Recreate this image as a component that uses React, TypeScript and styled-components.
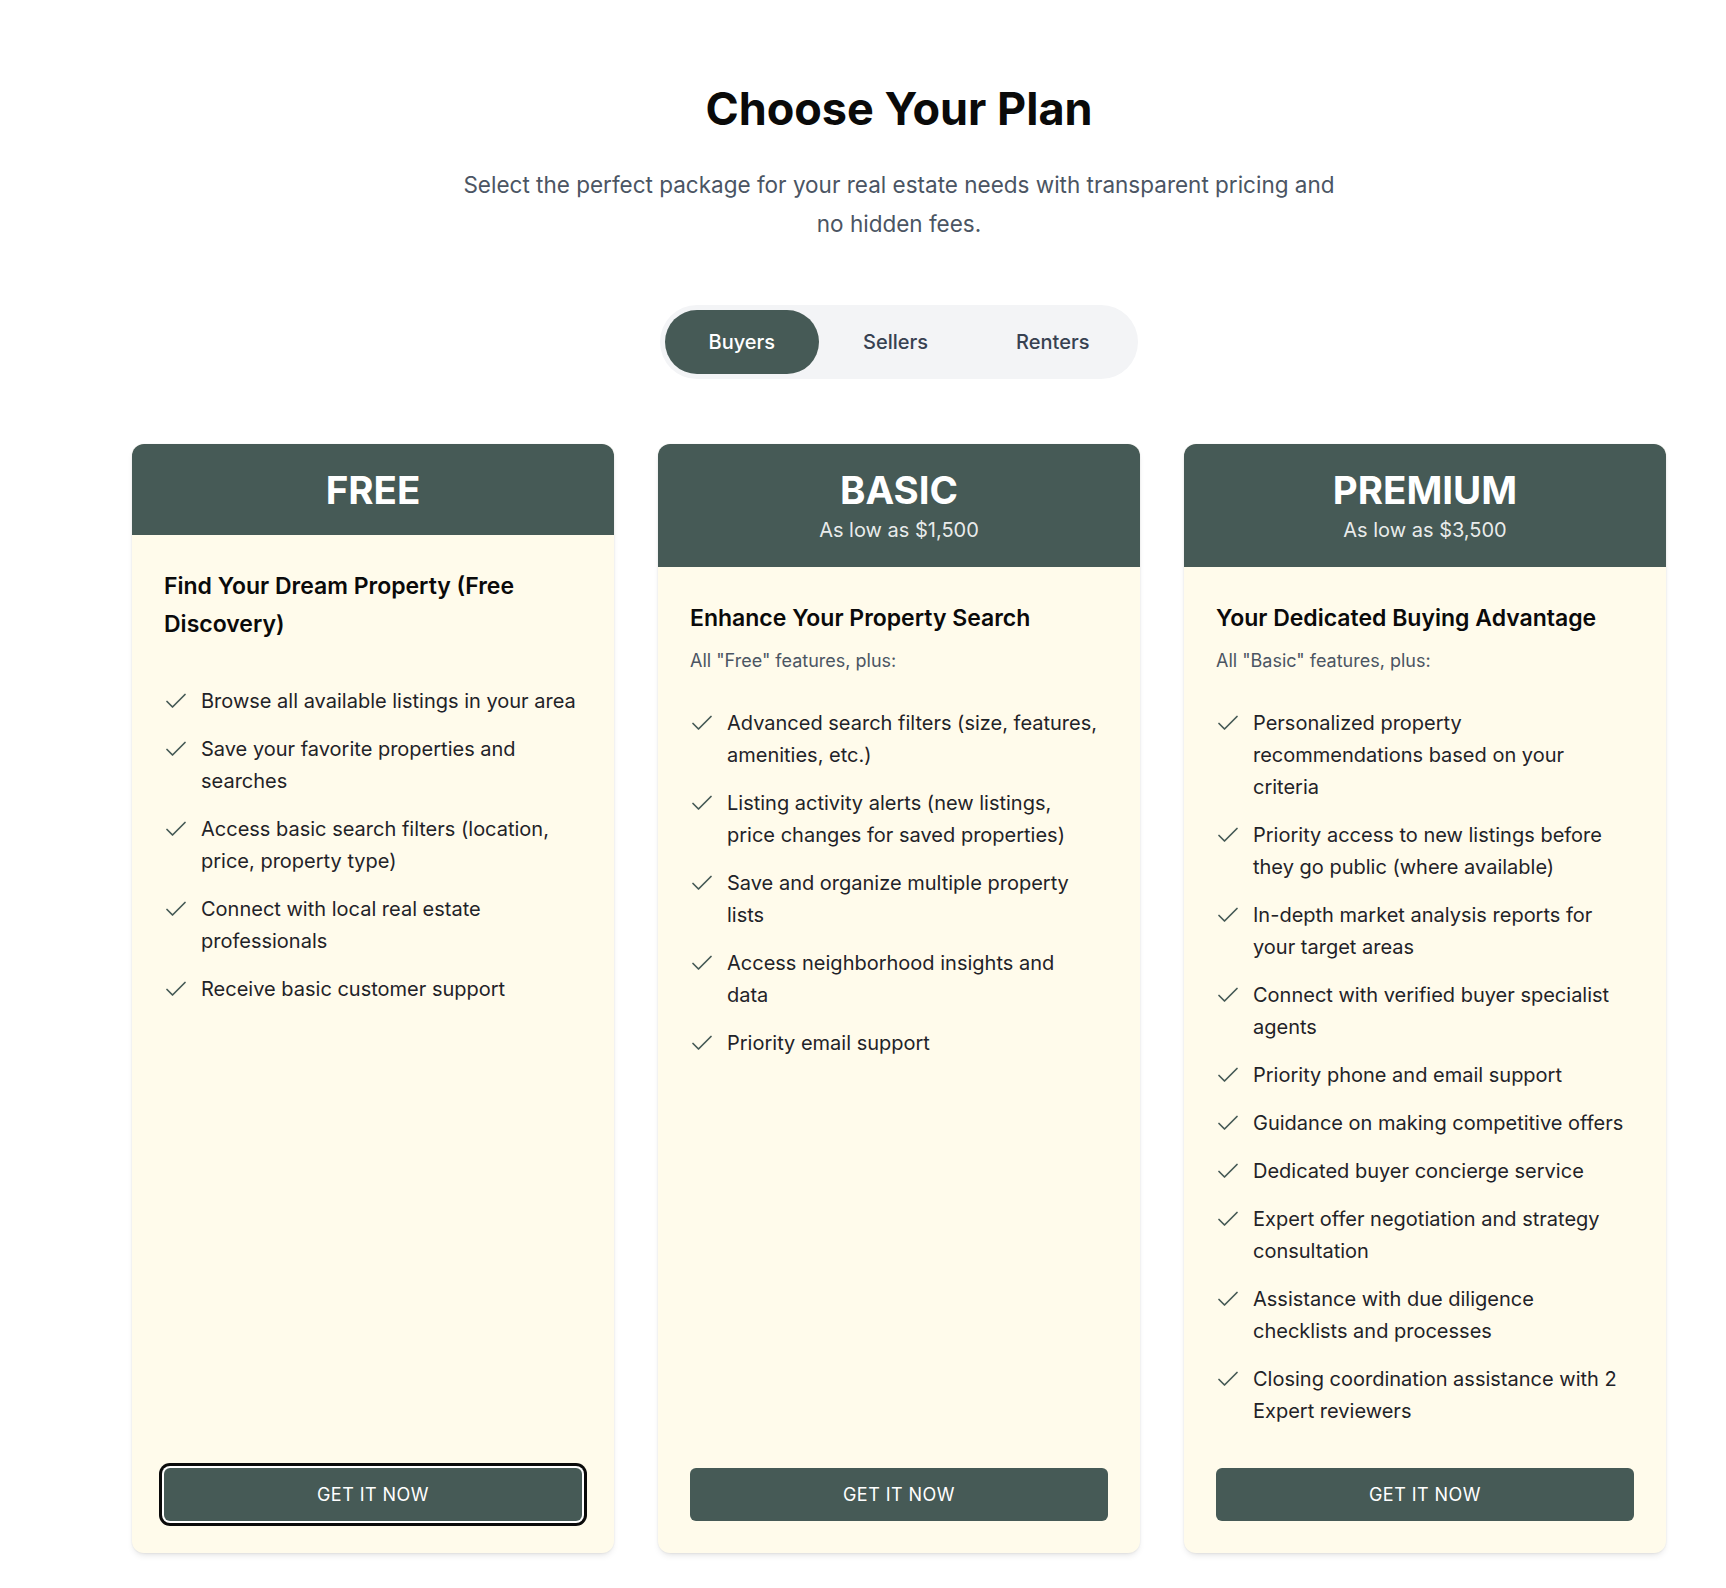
import React from 'react';
import styled, { createGlobalStyle } from 'styled-components';

const GlobalStyle = createGlobalStyle`
  * { box-sizing: border-box; }
  body {
    margin: 0;
    background: #ffffff;
    font-family: Inter, "Noto Sans", sans-serif;
    color: #111827;
  }
`;

const Page = styled.main`
  padding: 85px 60px 35px 132px;
  display: flex;
  flex-direction: column;
  align-items: center;
`;

const Title = styled.h1`
  margin: 0;
  font-size: 45px;
  line-height: 48px;
  font-weight: 700;
  color: #0a0a0a;
`;

const Subtitle = styled.p`
  margin: 32px 0 0;
  max-width: 896px;
  text-align: center;
  font-size: 22.5px;
  line-height: 39px;
  color: #4b5563;
`;

const Toggle = styled.div`
  margin-top: 62px;
  display: flex;
  padding: 5px;
  background: #f3f4f6;
  border-radius: 9999px;
`;

const ToggleButton = styled.button<{ $active?: boolean }>`
  border: 0;
  border-radius: 9999px;
  padding: 18px 44px;
  font: 500 20px/28px Inter, sans-serif;
  background: ${(p) => (p.$active ? '#465a56' : 'transparent')};
  color: ${(p) => (p.$active ? '#ffffff' : '#374151')};
  cursor: pointer;
`;

const Grid = styled.div`
  margin-top: 65px;
  width: 100%;
  display: grid;
  grid-template-columns: repeat(3, 1fr);
  gap: 44px;
`;

const Card = styled.article`
  display: flex;
  flex-direction: column;
  border-radius: 12px;
  overflow: hidden;
  background: #fffbeb;
  box-shadow: 0 4px 6px -1px rgba(0, 0, 0, 0.08), 0 2px 4px -2px rgba(0, 0, 0, 0.08),
    0 0 0 1px rgba(0, 0, 0, 0.02);
`;

const CardHeader = styled.header`
  background: #465a56;
  color: #ffffff;
  text-align: center;
  padding: 24px 24px 23px;
`;

const PlanName = styled.h2`
  margin: 0;
  font-size: 38.5px;
  line-height: 44px;
  font-weight: 700;
`;

const Price = styled.div`
  margin-top: 4px;
  font-size: 20px;
  line-height: 28px;
  color: rgba(255, 255, 255, 0.9);
`;

const CardBody = styled.div`
  flex: 1;
  display: flex;
  flex-direction: column;
  padding: 32px;
`;

const Heading = styled.h3`
  margin: 0 0 10px;
  font-size: 23px;
  line-height: 38px;
  font-weight: 600;
  color: #0a0a0a;
`;

const Note = styled.p`
  margin: 0;
  font-size: 18px;
  line-height: 28px;
  color: #4b5563;
`;

const List = styled.ul`
  list-style: none;
  margin: 32px 0 41px;
  padding: 0;
  display: flex;
  flex-direction: column;
  gap: 16px;
`;

const Item = styled.li`
  display: flex;
  align-items: flex-start;
  gap: 13px;
  font-size: 20px;
  line-height: 32px;
  color: #1f2328;
  white-space: pre-line;
`;

const CheckIcon = styled.svg`
  flex: none;
  width: 24px;
  height: 24px;
  margin-top: 4px;
  color: #465a56;
`;

const CtaButton = styled.button<{ $focused?: boolean }>`
  margin-top: auto;
  width: 100%;
  height: 53px;
  border: 0;
  border-radius: 6px;
  background: #465a56;
  color: #ffffff;
  font: 400 18px/23px Inter, sans-serif;
  text-transform: uppercase;
  letter-spacing: 0.025em;
  cursor: pointer;
  box-shadow: ${(p) => (p.$focused ? '0 0 0 2px #ffffff, 0 0 0 5px #0a0a0a' : 'none')};
`;

const Check = () => (
  <CheckIcon viewBox="0 0 24 24" fill="none" stroke="currentColor" strokeWidth={1.75} strokeLinecap="round" strokeLinejoin="round">
    <path d="M3 12.5l5.5 5.5L21 5.5" />
  </CheckIcon>
);

interface Plan {
  name: string;
  price?: string;
  heading: string;
  note?: string;
  features: string[];
}

const plans: Plan[] = [
  {
    name: 'FREE',
    heading: 'Find Your Dream Property (Free Discovery)',
    features: [
      'Browse all available listings in your area',
      'Save your favorite properties and searches',
      'Access basic search filters (location, price, property type)',
      'Connect with local real estate professionals',
      'Receive basic customer support',
    ],
  },
  {
    name: 'BASIC',
    price: 'As low as $1,500',
    heading: 'Enhance Your Property Search',
    note: 'All "Free" features, plus:',
    features: [
      'Advanced search filters (size, features, amenities, etc.)',
      'Listing activity alerts (new listings,\nprice changes for saved properties)',
      'Save and organize multiple property lists',
      'Access neighborhood insights and\ndata',
      'Priority email support',
    ],
  },
  {
    name: 'PREMIUM',
    price: 'As low as $3,500',
    heading: 'Your Dedicated Buying Advantage',
    note: 'All "Basic" features, plus:',
    features: [
      'Personalized property recommendations based on your criteria',
      'Priority access to new listings before they go public (where available)',
      'In-depth market analysis reports for your target areas',
      'Connect with verified buyer specialist agents',
      'Priority phone and email support',
      'Guidance on making competitive offers',
      'Dedicated buyer concierge service',
      'Expert offer negotiation and strategy consultation',
      'Assistance with due diligence\nchecklists and processes',
      'Closing coordination assistance with 2 Expert reviewers',
    ],
  },
];

const App: React.FC = () => {
  return (
    <>
      <GlobalStyle />
      <Page>
        <Title>Choose Your Plan</Title>
        <Subtitle>
          Select the perfect package for your real estate needs with transparent pricing and no hidden fees.
        </Subtitle>
        <Toggle>
          <ToggleButton $active>Buyers</ToggleButton>
          <ToggleButton>Sellers</ToggleButton>
          <ToggleButton>Renters</ToggleButton>
        </Toggle>
        <Grid>
          {plans.map((plan, i) => (
            <Card key={plan.name}>
              <CardHeader>
                <PlanName>{plan.name}</PlanName>
                {plan.price && <Price>{plan.price}</Price>}
              </CardHeader>
              <CardBody>
                <Heading>{plan.heading}</Heading>
                {plan.note && <Note>{plan.note}</Note>}
                <List>
                  {plan.features.map((f) => (
                    <Item key={f}>
                      <Check />
                      <span>{f}</span>
                    </Item>
                  ))}
                </List>
                <CtaButton $focused={i === 0}>Get it now</CtaButton>
              </CardBody>
            </Card>
          ))}
        </Grid>
      </Page>
    </>
  );
};

export default App;
